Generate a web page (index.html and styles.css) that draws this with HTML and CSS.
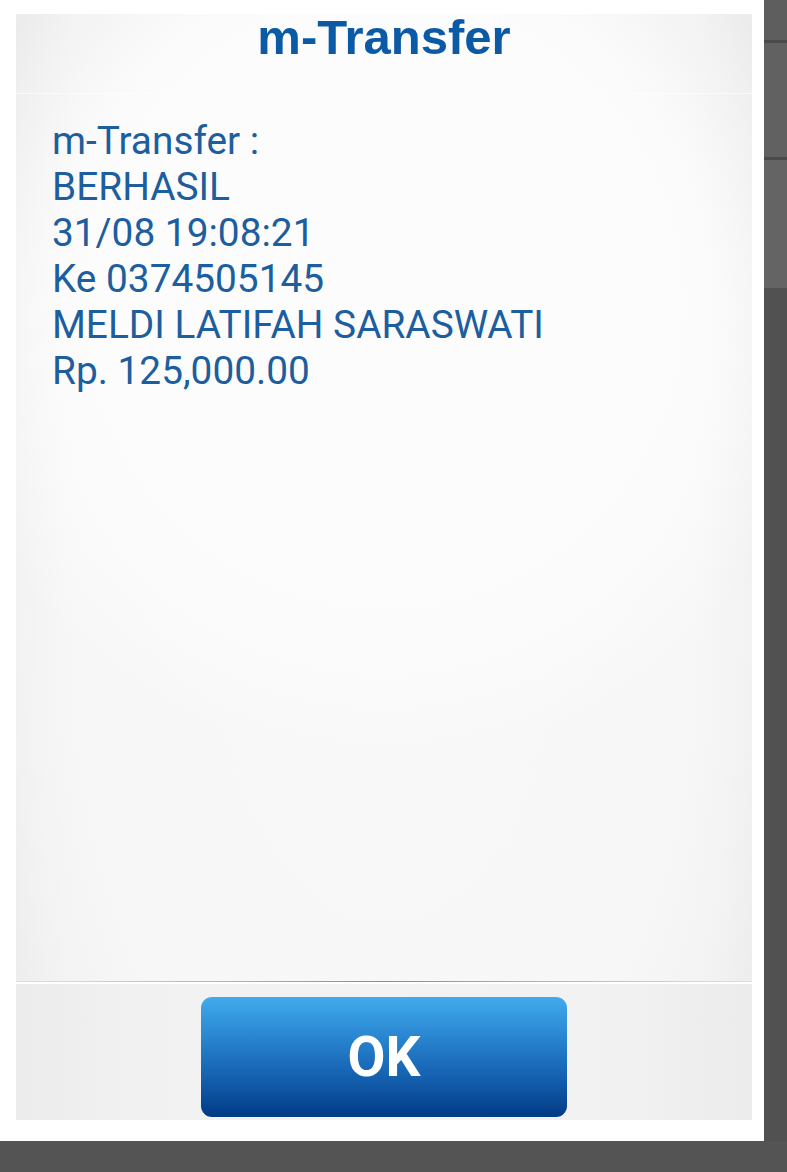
FILE: index.html
```html
<!DOCTYPE html>
<html>
<head>
<meta charset="utf-8">
<link rel="stylesheet" href="styles.css">
</head>
<body>
<div class="top">
  <div class="frame">
    <div class="panel">
      <div class="header">
        <h1 class="title">m-Transfer</h1>
      </div>
      <div class="content">
        <p class="line">m-Transfer :</p>
        <p class="line">BERHASIL</p>
        <p class="line">31/08 19:08:21</p>
        <p class="line">Ke 0374505145</p>
        <p class="line">MELDI LATIFAH SARASWATI</p>
        <p class="line">Rp. 125,000.00</p>
      </div>
      <div class="divider"></div>
      <div class="footer">
        <button class="ok">OK</button>
      </div>
    </div>
  </div>
  <div class="side">
    <div class="seg seg-a"></div>
    <div class="seg-line"></div>
    <div class="seg seg-b"></div>
    <div class="seg-line"></div>
    <div class="seg seg-c"></div>
    <div class="seg seg-d"></div>
  </div>
</div>
</body>
</html>
```
FILE: styles.css
```css
* { box-sizing: border-box; }
html, body { margin: 0; padding: 0; }
body {
  background: #545454;
  width: 787px;
  height: 1172px;
  overflow: hidden;
  font-family: Roboto, "Liberation Sans", sans-serif;
}
.top {
  display: flex;
  height: 1141px;
}
.frame {
  width: 764px;
  height: 1141px;
  background: #ffffff;
  padding: 14px 12px 21px 16px;
}
.panel {
  height: 1106px;
  width: 736px;
  display: flex;
  flex-direction: column;
  background:
    radial-gradient(ellipse 62% 42% at 50% 26%, #fdfcfd 0%, #fdfcfd 65%, rgba(253,252,253,0) 100%),
    radial-gradient(ellipse 60% 70% at 50% 55%, #f9f8f9 0%, #f7f7f7 70%, rgba(247,247,247,0) 100%),
    linear-gradient(90deg, #ebebeb 0%, #f1f0f1 8%, #f5f4f5 50%, #f1f0f1 92%, #ebebeb 100%);
}
.header {
  height: 80px;
  padding-top: 3px;
  border-bottom: 1px solid rgba(255,255,255,0.6);
}
.title {
  margin: 0;
  text-align: center;
  font-family: "Liberation Sans", Arial, sans-serif;
  font-weight: 700;
  font-size: 49px;
  line-height: 40px;
  color: #0b5aa5;
  letter-spacing: 0;
}
.content {
  flex: 1;
  padding: 24px 36px 0 36px;
}
.line {
  margin: 0;
  font-size: 38.8px;
  line-height: 46px;
  color: #1c5e9e;
}
.divider {
  height: 3px;
  background:
    linear-gradient(90deg, rgba(160,160,168,0.2) 0%, #8a8b92 50%, rgba(160,160,168,0.2) 100%) top / 100% 1px no-repeat,
    linear-gradient(#ffffff, #ffffff) bottom / 100% 2px no-repeat;
}
.footer {
  height: 136px;
  display: flex;
  justify-content: center;
  align-items: flex-start;
  padding-top: 13px;
  background: linear-gradient(90deg, #ebebeb 0%, #f2f1f2 15%, #f4f3f4 50%, #f2f1f2 85%, #ebebeb 100%);
}
.ok {
  width: 366px;
  height: 120px;
  border: none;
  border-radius: 11px;
  background: linear-gradient(180deg, #42abec 0%, #2f8fd8 25%, #1b6dbc 55%, #0c52a0 80%, #023a84 100%);
  color: #ffffff;
  font-family: Roboto, "Liberation Sans", sans-serif;
  font-weight: 700;
  font-size: 55px;
  padding: 0;
}
.side {
  width: 23px;
  display: flex;
  flex-direction: column;
}
.seg-a { height: 40px; background: #5e5e5e; }
.seg-line { height: 3px; background: #4a4a4a; }
.seg-b { height: 114px; background: #616161; }
.seg-c { height: 128px; background: #646464; }
.seg-d { flex: 1; background: #515151; }
```
